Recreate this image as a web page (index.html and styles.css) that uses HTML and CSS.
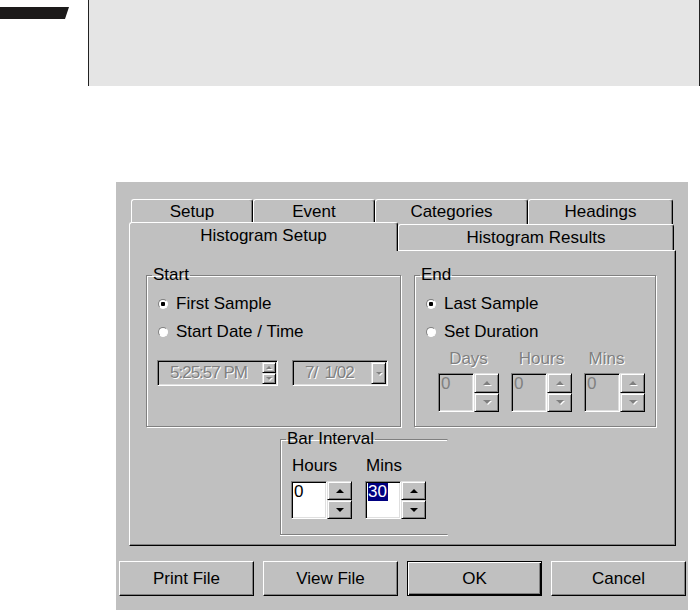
FILE: index.html
```html
<!DOCTYPE html>
<html lang="en">
<head>
  <meta charset="UTF-8">
  <title>Histogram Setup</title>
  <link rel="stylesheet" href="styles.css">
</head>
<body>

  <div class="page-top">
    <div class="mark"></div>
    <div class="note"></div>
  </div>

  <div class="dialog">
    <div class="tabs tabs-back">
      <div class="tab w-setup">Setup</div>
      <div class="tab w-event">Event</div>
      <div class="tab w-cat">Categories</div>
      <div class="tab w-head">Headings</div>
    </div>
    <div class="tabs tabs-front">
      <div class="tab active w-hsetup">Histogram Setup</div>
      <div class="tab w-hres">Histogram Results</div>
    </div>

    <div class="panel">
      <div class="groups">
        <fieldset class="group start">
          <legend>Start</legend>
          <div class="group-body">
            <div class="option"><span class="radio checked"></span>First Sample</div>
            <div class="option"><span class="radio"></span>Start Date / Time</div>
            <div class="fields">
              <div class="field time">
                <div class="field-text">5:25:57 PM</div>
                <div class="mini-spin">
                  <div class="sb"><i class="arrow up off small"></i></div>
                  <div class="sb"><i class="arrow down off small"></i></div>
                </div>
              </div>
              <div class="field date">
                <div class="field-text">7/&nbsp; 1/02</div>
                <div class="sb drop"><i class="arrow down off small"></i></div>
              </div>
            </div>
          </div>
        </fieldset>

        <fieldset class="group end">
          <legend>End</legend>
          <div class="group-body">
            <div class="option"><span class="radio checked"></span>Last Sample</div>
            <div class="option"><span class="radio"></span>Set Duration</div>
            <div class="spins">
              <div class="spin-col">
                <div class="spin-label off-text">Days</div>
                <div class="spin disabled">
                  <div class="edit">0</div>
                  <div class="spin-btns">
                    <div class="sb"><i class="arrow up off"></i></div>
                    <div class="sb"><i class="arrow down off"></i></div>
                  </div>
                </div>
              </div>
              <div class="spin-col">
                <div class="spin-label off-text">Hours</div>
                <div class="spin disabled">
                  <div class="edit">0</div>
                  <div class="spin-btns">
                    <div class="sb"><i class="arrow up off"></i></div>
                    <div class="sb"><i class="arrow down off"></i></div>
                  </div>
                </div>
              </div>
              <div class="spin-col">
                <div class="spin-label off-text mins">Mins</div>
                <div class="spin disabled">
                  <div class="edit">0</div>
                  <div class="spin-btns">
                    <div class="sb"><i class="arrow up off"></i></div>
                    <div class="sb"><i class="arrow down off"></i></div>
                  </div>
                </div>
              </div>
            </div>
          </div>
        </fieldset>
      </div>

      <fieldset class="group bar">
        <legend>Bar Interval</legend>
        <div class="group-body">
          <div class="spins">
            <div class="spin-col">
              <div class="spin-label left">Hours</div>
              <div class="spin">
                <div class="edit">0</div>
                <div class="spin-btns">
                  <div class="sb"><i class="arrow up"></i></div>
                  <div class="sb"><i class="arrow down"></i></div>
                </div>
              </div>
            </div>
            <div class="spin-col">
              <div class="spin-label left">Mins</div>
              <div class="spin">
                <div class="edit"><span class="selected">30</span></div>
                <div class="spin-btns">
                  <div class="sb"><i class="arrow up"></i></div>
                  <div class="sb"><i class="arrow down"></i></div>
                </div>
              </div>
            </div>
          </div>
        </div>
      </fieldset>
    </div>

    <div class="buttons">
      <div class="btn">Print File</div>
      <div class="btn">View File</div>
      <div class="btn default">OK</div>
      <div class="btn">Cancel</div>
    </div>
  </div>

</body>
</html>
```

FILE: styles.css
```css
:root {
  --face: #c0c0c0;
  --shadow: #808080;
  --light: #dfdfdf;
  --dark: #000;
}

body {
  margin: 0;
  background-color: #fff;
  font-family: 'Liberation Sans', Arial, sans-serif;
  font-size: 17px;
  color: #000;
}

/* page header */
.page-top {
  display: flex;
  height: 86px;
}

.mark {
  width: 69px;
  height: 12px;
  margin-top: 7px;
  background-color: #1c1a1a;
  clip-path: polygon(0 0, 100% 0, calc(100% - 4px) 100%, 0 100%);
}

.note {
  flex: 1;
  margin-left: 19px;
  background-color: #e5e5e5;
  border-left: 1px solid #222;
  border-right: 1px solid #222;
}

/* dialog */
.dialog {
  box-sizing: border-box;
  width: 572px;
  height: 428px;
  margin: 96px 0 0 116px;
  padding-top: 17px;
  background-color: var(--face);
}

.tabs {
  display: flex;
}

.tabs-back {
  height: 25px;
  width: 542px;
  margin-left: 15px;
}

.tabs-front {
  height: 26px;
  width: 545px;
  margin-left: 13px;
  align-items: flex-end;
}

.tab {
  box-sizing: border-box;
  display: flex;
  align-items: center;
  justify-content: center;
  height: 100%;
  border-top: 1px solid #fff;
  border-left: 1px solid #fff;
  border-right: 1px solid var(--dark);
  border-radius: 3px 3px 0 0;
  box-shadow: inset -1px 0 var(--shadow);
  line-height: 18px;
}

.tab.active {
  position: relative;
  z-index: 1;
  height: 29px;
  margin-bottom: -1px;
  padding-bottom: 2px;
  background-color: var(--face);
}

.w-setup { width: 122px; }
.w-event { width: 122px; }
.w-cat { width: 153px; }
.w-head { width: 145px; }
.w-hsetup { width: 269px; }
.w-hres { width: 276px; }

.panel {
  box-sizing: border-box;
  width: 547px;
  height: 296px;
  margin-left: 13px;
  padding: 15px 0 0 16px;
  border: 1px solid;
  border-color: #fff var(--dark) var(--dark) #fff;
  box-shadow: inset -1px -1px var(--shadow);
}

/* group boxes */
.groups {
  display: flex;
  gap: 13px;
}

.group {
  box-sizing: border-box;
  min-width: 0;
  margin: 0;
  padding: 0;
  border: 1px solid var(--shadow);
  box-shadow: inset 1px 1px #fff, 1px 1px #fff;
}

.group legend {
  margin-left: 5px;
  padding: 0 1px;
  line-height: 18px;
}

.group-body {
  padding: 6px 0 0 11px;
}

.start { width: 255px; }

.end { width: 242px; }

.end .group-body {
  padding-bottom: 14px;
}

.bar {
  width: 168px;
  margin: 3px 0 0 134px;
  border-right-color: transparent;
  box-shadow: inset 1px 1px #fff, 0 1px #fff;
}

.bar .group-body {
  padding: 9px 0 15px 10px;
}

.option {
  display: flex;
  align-items: center;
  height: 28px;
}

.radio {
  box-sizing: border-box;
  width: 10px;
  height: 10px;
  margin-right: 8px;
  border-radius: 50%;
  border: 1px solid;
  border-color: var(--shadow) #fff #fff var(--shadow);
  background-color: #fff;
}

.radio.checked {
  background: radial-gradient(circle, #000 0, #000 2px, #fff 2.5px);
}

/* spin buttons and arrows */
.sb {
  box-sizing: border-box;
  flex: 1;
  display: flex;
  align-items: center;
  justify-content: center;
  border: 1px solid;
  border-color: var(--light) var(--dark) var(--dark) var(--light);
  box-shadow: inset 1px 1px #fff, inset -1px -1px var(--shadow);
  background-color: var(--face);
}

.arrow {
  width: 0;
  height: 0;
  border-left: 4px solid transparent;
  border-right: 4px solid transparent;
}

.arrow.up { border-bottom: 4px solid #000; }
.arrow.down { border-top: 4px solid #000; }

.arrow.small {
  border-left-width: 3px;
  border-right-width: 3px;
}

.arrow.small.up { border-bottom-width: 3px; }
.arrow.small.down { border-top-width: 3px; }

.arrow.off {
  border-top-color: transparent;
  border-bottom-color: transparent;
  filter: drop-shadow(1px 1px 0 #fff);
}

.arrow.up.off { border-bottom-color: var(--shadow); }
.arrow.down.off { border-top-color: var(--shadow); }

/* start date/time fields */
.fields {
  display: flex;
  gap: 14px;
  margin-top: 14px;
}

.field,
.edit {
  box-sizing: border-box;
  border: 1px solid;
  border-color: var(--shadow) #fff #fff var(--shadow);
  box-shadow: inset 1px 1px var(--dark), inset -1px -1px var(--light);
}

.field {
  display: flex;
  height: 26px;
  padding: 1px;
}

.time { width: 121px; margin-left: -1px; }
.date { width: 96px; }

.field-text {
  flex: 1;
  min-width: 0;
  padding-left: 11px;
  line-height: 22px;
  letter-spacing: -1px;
  color: var(--shadow);
  text-shadow: 1px 1px #fff;
  white-space: nowrap;
}

.mini-spin {
  display: flex;
  flex-direction: column;
  flex: none;
  width: 14px;
}

.field .drop {
  flex: none;
  width: 15px;
}

/* spin boxes */
.spins {
  display: flex;
  gap: 12px;
}

.end .spins {
  margin-left: 12px;
}

.bar .spins {
  gap: 13px;
}

.spin-col {
  display: flex;
  flex-direction: column;
  width: 61px;
}

.spin-label {
  margin: 4px 0 5px;
  line-height: 18px;
  text-align: center;
}

.spin-label.mins {
  padding-right: 16px;
}

.spin-label.left {
  margin: 0 0 6px;
  padding-left: 1px;
  text-align: left;
}

.off-text {
  color: var(--shadow);
  text-shadow: 1px 1px #fff;
}

.spin {
  display: flex;
  height: 39px;
}

.bar .spin {
  height: 38px;
}

.edit {
  width: 36px;
  padding: 1px 2px;
  line-height: 18px;
  background-color: #fff;
}

.spin.disabled .edit {
  background-color: var(--face);
  color: var(--shadow);
}

.selected {
  display: inline-block;
  background-color: #000080;
  color: #fff;
  padding-right: 1px;
}

.spin-btns {
  display: flex;
  flex-direction: column;
  width: 25px;
}

/* buttons */
.buttons {
  display: grid;
  grid-template-columns: repeat(4, 135px);
  gap: 9px;
  margin: 15px 0 0 3px;
}

.btn {
  box-sizing: border-box;
  display: flex;
  align-items: center;
  justify-content: center;
  height: 35px;
  border: 1px solid;
  border-color: #fff var(--dark) var(--dark) #fff;
  box-shadow: inset -1px -1px var(--shadow);
}

.btn.default {
  border-color: var(--dark);
  box-shadow: inset 1px 1px #fff, inset -1px -1px var(--dark), inset -2px -2px var(--shadow);
}
```
